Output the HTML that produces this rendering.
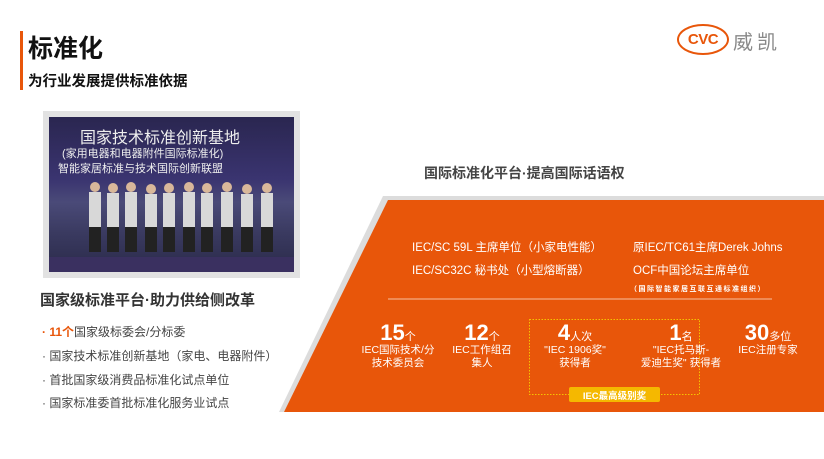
<!DOCTYPE html>
<html><head><meta charset="utf-8"><style>
*{margin:0;padding:0;box-sizing:border-box}
body{width:824px;height:459px;background:#fff;position:relative;overflow:hidden;font-family:"Liberation Sans","Noto Sans CJK SC",sans-serif;color:#222}
.a{position:absolute;white-space:nowrap}
.w{color:#fff}
.c{text-align:center}
</style></head><body>
<div class="a" style="left:20px;top:31px;width:3px;height:59px;background:#e8560a"></div>
<div class="a" style="left:28px;top:29px;font-size:25px;font-weight:bold;color:#111">标准化</div>
<div class="a" style="left:28px;top:70px;font-size:14.5px;font-weight:bold;color:#111">为行业发展提供标准依据</div>
<div class="a" style="left:677px;top:24px;width:52px;height:31px;border:2px solid #e8560a;border-radius:50%;color:#e8560a;font-weight:bold;font-size:15px;line-height:27px;text-align:center;letter-spacing:-0.5px">CVC</div>
<div class="a" style="left:733px;top:26px;font-size:20px;color:#888;letter-spacing:4px">威凯</div>
<div class="a" style="left:43px;top:111px;width:257px;height:167px;background:#e2e2e2"></div>
<div class="a" style="left:49px;top:117px;width:245px;height:155px;background:linear-gradient(180deg,#2a2650 0%,#3a3470 40%,#4a4a78 55%,#3a3a60 75%,#2a2a4a 100%)"></div>
<svg class="a" style="left:49px;top:117px" width="245" height="155">
<g fill="#d8d8d8"><rect x="40" y="75" width="12" height="40"/><rect x="58" y="76" width="12" height="40"/><rect x="76" y="75" width="12" height="42"/><rect x="96" y="77" width="12" height="40"/><rect x="114" y="76" width="12" height="40"/><rect x="134" y="75" width="12" height="42"/><rect x="152" y="76" width="12" height="40"/><rect x="172" y="75" width="12" height="42"/><rect x="192" y="77" width="12" height="40"/><rect x="212" y="76" width="12" height="40"/></g>
<g fill="#222"><rect x="40" y="110" width="12" height="25"/><rect x="58" y="110" width="12" height="25"/><rect x="76" y="110" width="12" height="25"/><rect x="96" y="110" width="12" height="25"/><rect x="114" y="110" width="12" height="25"/><rect x="134" y="110" width="12" height="25"/><rect x="152" y="110" width="12" height="25"/><rect x="172" y="110" width="12" height="25"/><rect x="192" y="110" width="12" height="25"/><rect x="212" y="110" width="12" height="25"/></g>
<g fill="#d9b89a"><circle cx="46" cy="70" r="5"/><circle cx="64" cy="71" r="5"/><circle cx="82" cy="70" r="5"/><circle cx="102" cy="72" r="5"/><circle cx="120" cy="71" r="5"/><circle cx="140" cy="70" r="5"/><circle cx="158" cy="71" r="5"/><circle cx="178" cy="70" r="5"/><circle cx="198" cy="72" r="5"/><circle cx="218" cy="71" r="5"/></g>
<rect x="0" y="140" width="245" height="15" fill="#3a3060"/>
</svg>
<div class="a" style="left:80px;top:124px;font-size:16px;color:#eee">国家技术标准创新基地</div>
<div class="a" style="left:62px;top:145px;font-size:11px;color:#eee">(家用电器和电器附件国际标准化)</div>
<div class="a" style="left:58px;top:160px;font-size:11px;color:#eee">智能家居标准与技术国际创新联盟</div>
<div class="a" style="left:40px;top:289px;font-size:15px;font-weight:bold;color:#333">国家级标准平台·助力供给侧改革</div>
<div class="a" style="left:42px;top:323px;font-size:12px;color:#444"><span style="color:#e8560a;font-weight:bold">· 11个</span>国家级标委会/分标委</div>
<div class="a" style="left:42px;top:347px;font-size:12px;color:#444">· 国家技术标准创新基地（家电、电器附件）</div>
<div class="a" style="left:42px;top:371px;font-size:12px;color:#444">· 首批国家级消费品标准化试点单位</div>
<div class="a" style="left:42px;top:394px;font-size:12px;color:#444">· 国家标准委首批标准化服务业试点</div>
<div class="a" style="left:424px;top:163px;font-size:14px;font-weight:bold;color:#444">国际标准化平台·提高国际话语权</div>
<svg class="a" style="left:0;top:0" width="824" height="459"><polygon points="383,196 824,196 824,412 279,412" fill="#dcdcdc"/><polygon points="388,200 824,200 824,412 284,412" fill="#e8560a"/><line x1="388" y1="299" x2="772" y2="299" stroke="#f6c0a0" stroke-width="1"/><rect x="529.5" y="319.5" width="170" height="75" fill="none" stroke="#f5c400" stroke-dasharray="1.5,1.5"/><rect x="569" y="387" width="91" height="15" rx="2" fill="#f5b800"/></svg>
<div class="a w" style="left:412px;top:239px;font-size:11.5px">IEC/SC 59L 主席单位（小家电性能）</div>
<div class="a w" style="left:412px;top:262px;font-size:11.5px">IEC/SC32C 秘书处（小型熔断器）</div>
<div class="a w" style="left:633px;top:239px;font-size:11.5px">原IEC/TC61主席Derek Johns</div>
<div class="a w" style="left:633px;top:262px;font-size:11.5px">OCF中国论坛主席单位</div>
<div class="a w" style="left:630px;top:284px;font-size:7px;font-weight:bold;letter-spacing:1.5px">（国际智能家居互联互通标准组织）</div>
<div class="a w c" style="left:353px;top:326px;width:90px;font-size:11px;line-height:13px"><b style="font-size:22px">15</b>个<br><span style="font-size:10.5px">IEC国际技术/分<br>技术委员会</span></div>
<div class="a w c" style="left:437px;top:326px;width:90px;font-size:11px;line-height:13px"><b style="font-size:22px">12</b>个<br><span style="font-size:10.5px">IEC工作组召<br>集人</span></div>
<div class="a w c" style="left:530px;top:326px;width:90px;font-size:11px;line-height:13px"><b style="font-size:22px">4</b>人次<br><span style="font-size:10.5px">"IEC 1906奖"<br>获得者</span></div>
<div class="a w c" style="left:626px;top:326px;width:110px;font-size:11px;line-height:13px"><b style="font-size:22px">1</b>名<br><span style="font-size:10.5px">"IEC托马斯-<br>爱迪生奖" 获得者</span></div>
<div class="a w c" style="left:718px;top:326px;width:100px;font-size:11px;line-height:13px"><b style="font-size:22px">30</b>多位<br><span style="font-size:10.5px">IEC注册专家</span></div>
<div class="a w c" style="left:569px;top:388px;width:91px;font-size:9.5px;font-weight:bold">IEC最高级别奖</div>
</body></html>
